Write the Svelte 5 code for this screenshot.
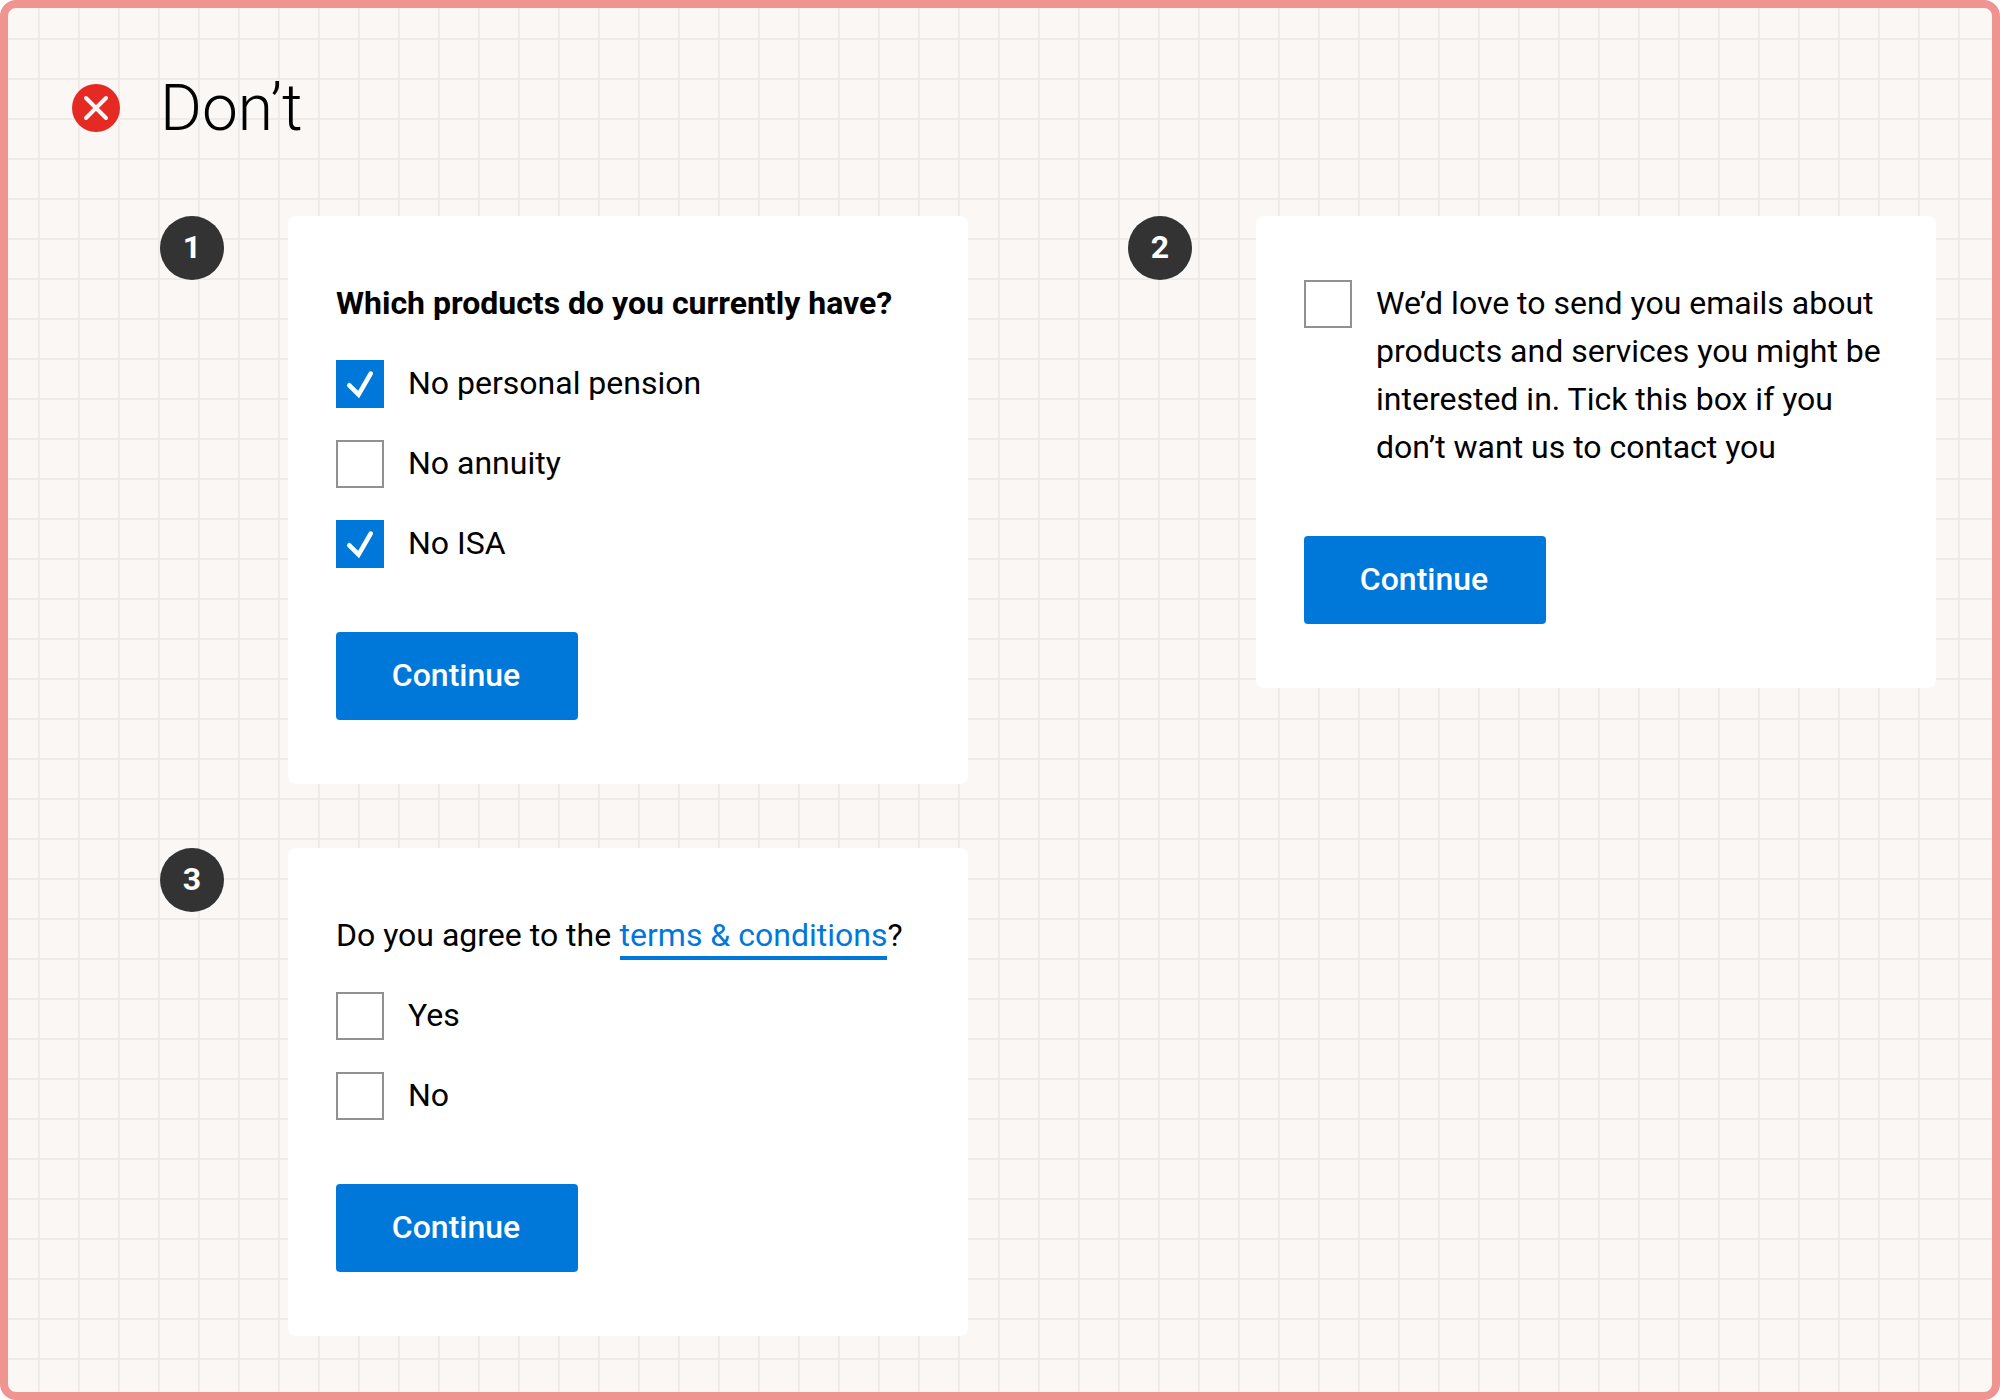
<script>
  const examples = [
    {
      id: 1,
      title: 'Which products do you currently have?',
      options: [
        { label: 'No personal pension', checked: true },
        { label: 'No annuity', checked: false },
        { label: 'No ISA', checked: true },
      ],
    },
    {
      id: 2,
      options: [
        {
          label:
            'We’d love to send you emails about products and services you might be interested in. Tick this box if you don’t want us to contact you',
          checked: false,
        },
      ],
    },
    {
      id: 3,
      link: 'terms & conditions',
      options: [
        { label: 'Yes', checked: false },
        { label: 'No', checked: false },
      ],
    },
  ];
</script>

<main class="board">
  <header>
    <svg class="cross" viewBox="0 0 48 48" aria-hidden="true">
      <circle cx="24" cy="24" r="24" />
      <path d="M14 14 34 34M34 14 14 34" />
    </svg>
    <h1>Don’t</h1>
  </header>

  <div class="examples">
    {#each examples as ex (ex.id)}
      <section class="example">
        <span class="badge">{ex.id}</span>
        <div class="card">
          {#if ex.title}
            <h2>{ex.title}</h2>
          {/if}
          {#if ex.link}
            <p>Do you agree to the <span class="link">{ex.link}</span>?</p>
          {/if}
          <div class="options">
            {#each ex.options as option}
              <div class="option">
                <span class="box" class:checked={option.checked}>
                  {#if option.checked}
                    <svg viewBox="0 0 48 48" aria-hidden="true">
                      <path d="M13.3 25.3 22.6 34.6 34.7 13.6" />
                    </svg>
                  {/if}
                </span>
                <span class="label">{option.label}</span>
              </div>
            {/each}
          </div>
          <button type="button">Continue</button>
        </div>
      </section>
    {/each}
  </div>
</main>

<style>
  :global(body) {
    background: #fff;
  }

  .board {
    box-sizing: border-box;
    width: 2000px;
    height: 1400px;
    padding: 56px 56px 0 64px;
    border: 8px solid #f09491;
    border-radius: 16px;
    background-color: #fbf7f4;
    background-image:
      linear-gradient(to right, transparent 38px, #efebe8 38px),
      linear-gradient(to bottom, transparent 38px, #efebe8 38px);
    background-size: 40px 40px;
    background-origin: border-box;
    color: #000;
    font-family: Roboto, sans-serif;
    font-size: 32px;
    line-height: 48px;
  }

  header {
    display: flex;
    align-items: center;
    gap: 40px;
    height: 88px;
  }

  .cross {
    width: 48px;
    height: 48px;
  }

  .cross circle {
    fill: #e52a23;
  }

  .cross path {
    fill: none;
    stroke: #fbf7f4;
    stroke-width: 4;
    stroke-linecap: round;
  }

  h1 {
    margin: 0;
    padding-top: 2px;
    font-size: 64px;
    font-weight: 300;
    line-height: 88px;
  }

  .examples {
    display: grid;
    grid-template-columns: 808px 808px;
    column-gap: 160px;
    row-gap: 64px;
    margin: 64px 0 0 88px;
  }

  .example {
    display: flex;
    align-items: flex-start;
    gap: 64px;
  }

  .badge {
    flex: none;
    width: 64px;
    height: 64px;
    border-radius: 50%;
    background: #333;
    color: #fff;
    font-weight: 700;
    line-height: 62px;
    text-align: center;
  }

  .card {
    box-sizing: border-box;
    width: 680px;
    padding: 64px 48px;
    border-radius: 8px;
    background: #fff;
  }

  h2,
  p {
    margin: -1px 0 33px;
    font-size: 32px;
    line-height: 48px;
    white-space: nowrap;
  }

  h2 {
    font-weight: 700;
  }

  .link {
    margin-left: 0.5px;
    padding-bottom: 2px;
    border-bottom: 4px solid #0078d9;
    color: #0078d9;
  }

  .options {
    display: flex;
    flex-direction: column;
    gap: 32px;
  }

  .option {
    display: flex;
    gap: 24px;
  }

  .label {
    margin: -1px 0 1px;
  }

  .box {
    box-sizing: border-box;
    flex: none;
    width: 48px;
    height: 48px;
    border: 2px solid #919191;
    background: #fff;
  }

  .box.checked {
    border: 0;
    background: #0078d9;
  }

  .box svg {
    display: block;
  }

  .box path {
    fill: none;
    stroke: #fff;
    stroke-width: 4.6;
    stroke-linecap: round;
  }

  button {
    display: block;
    width: 242px;
    height: 88px;
    margin-top: 64px;
    padding: 0 2px 2px 0;
    border: 0;
    border-radius: 4px;
    background: #0078d9;
    color: #fff;
    font: 500 32px/48px Roboto, sans-serif;
  }
</style>
